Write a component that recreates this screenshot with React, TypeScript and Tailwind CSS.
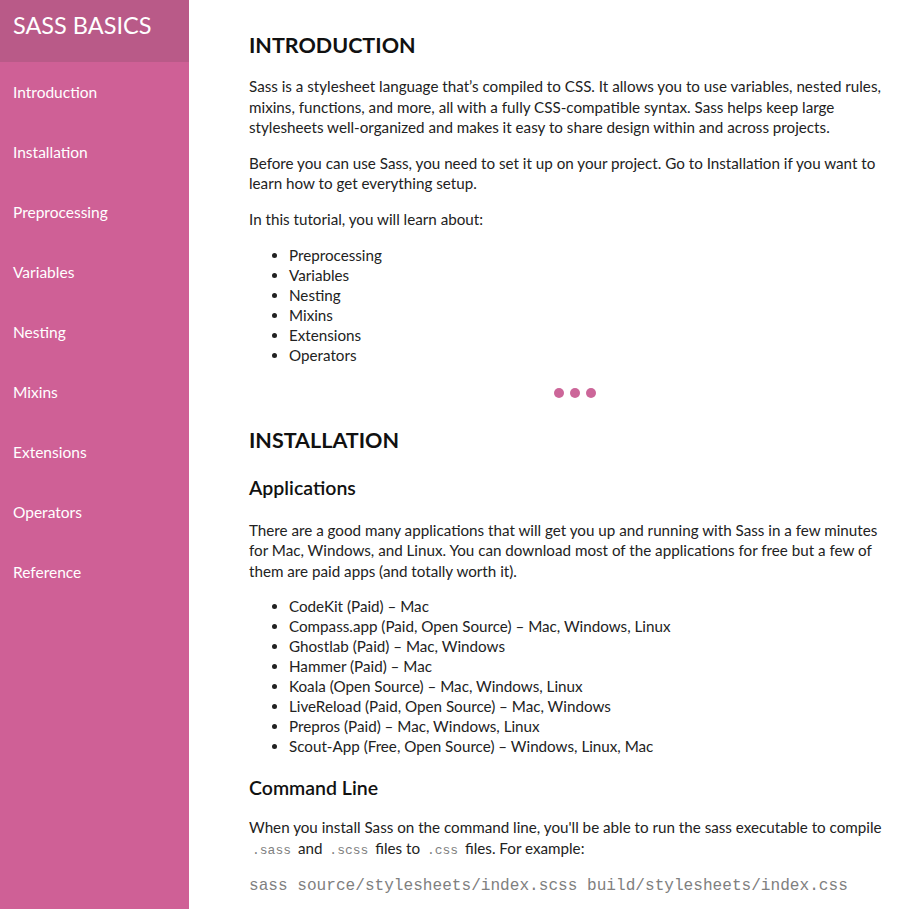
import React from "react";

const nav = [
  "Introduction",
  "Installation",
  "Preprocessing",
  "Variables",
  "Nesting",
  "Mixins",
  "Extensions",
  "Operators",
  "Reference",
];

const topics = ["Preprocessing", "Variables", "Nesting", "Mixins", "Extensions", "Operators"];

const apps = [
  "CodeKit (Paid) – Mac",
  "Compass.app (Paid, Open Source) – Mac, Windows, Linux",
  "Ghostlab (Paid) – Mac, Windows",
  "Hammer (Paid) – Mac",
  "Koala (Open Source) – Mac, Windows, Linux",
  "LiveReload (Paid, Open Source) – Mac, Windows",
  "Prepros (Paid) – Mac, Windows, Linux",
  "Scout-App (Free, Open Source) – Windows, Linux, Mac",
];

function Code({ children }: { children: React.ReactNode }) {
  return (
    <code className="px-[3px] font-['Liberation_Mono',monospace] text-[13px] text-[#808080]">{children}</code>
  );
}

export default function App() {
  return (
    <div className="flex min-h-[909px] w-full font-['Lato',sans-serif] text-[15.2px] text-[#222]">
      <aside className="w-[189px] shrink-0 bg-[#cf6096] text-white">
        <div className="flex h-[62px] items-center bg-[#b95a88] pb-[10px] pl-[13px] text-[23.5px] leading-none">
          SASS BASICS
        </div>
        <nav className="flex flex-col pt-[1px]">
          {nav.map((n) => (
            <a key={n} className="flex h-[60px] items-center pl-[13px] text-[15.5px]">
              {n}
            </a>
          ))}
        </nav>
      </aside>
      <main className="flex-1 pl-[60px] pr-[20px] pt-[30px]">
        <h2 className="text-[21.5px] font-bold leading-[30px] text-[#111]">INTRODUCTION</h2>
        <p className="mt-[16px] leading-[20.5px]">
          Sass is a stylesheet language that’s compiled to CSS. It allows you to use variables, nested rules,
          mixins, functions, and more, all with a fully CSS-compatible syntax. Sass helps keep large
          stylesheets well-organized and makes it easy to share design within and across projects.
        </p>
        <p className="mt-[15px] leading-[20.5px]">
          Before you can use Sass, you need to set it up on your project. Go to Installation if you want to
          learn how to get everything setup.
        </p>
        <p className="mt-[15px] leading-[20px]">In this tutorial, you will learn about:</p>
        <ul className="mt-[16px] list-disc pl-[40px] leading-[20px]">
          {topics.map((t) => (
            <li key={t}>{t}</li>
          ))}
        </ul>
        <div className="mt-[23px] flex justify-center gap-[6px] pl-[12px]">
          <span className="h-[10px] w-[10px] rounded-full bg-[#cc6699]" />
          <span className="h-[10px] w-[10px] rounded-full bg-[#cc6699]" />
          <span className="h-[10px] w-[10px] rounded-full bg-[#cc6699]" />
        </div>
        <h2 className="mt-[27px] text-[21.5px] font-bold leading-[30px] text-[#111]">INSTALLATION</h2>
        <h3 className="mt-[20px] text-[19.5px] font-semibold leading-[26px] text-[#111]">Applications</h3>
        <p className="mt-[19px] leading-[20.5px]">
          There are a good many applications that will get you up and running with Sass in a few minutes
          for Mac, Windows, and Linux. You can download most of the applications for free but a few of
          them are paid apps (and totally worth it).
        </p>
        <ul className="mt-[15px] list-disc pl-[40px] leading-[20px]">
          {apps.map((t) => (
            <li key={t}>{t}</li>
          ))}
        </ul>
        <h3 className="mt-[19px] text-[19.5px] font-semibold leading-[26px] text-[#111]">Command Line</h3>
        <p className="mt-[16px] leading-[20.5px]">
          When you install Sass on the command line, you'll be able to run the sass executable to compile{" "}
          <Code>.sass</Code> and <Code>.scss</Code> files to <Code>.css</Code> files. For example:
        </p>
        <pre className="mt-[15px] font-['Liberation_Mono',monospace] text-[16.1px] leading-[20px] text-[#808080]">
          sass source/stylesheets/index.scss build/stylesheets/index.css
        </pre>
      </main>
    </div>
  );
}
